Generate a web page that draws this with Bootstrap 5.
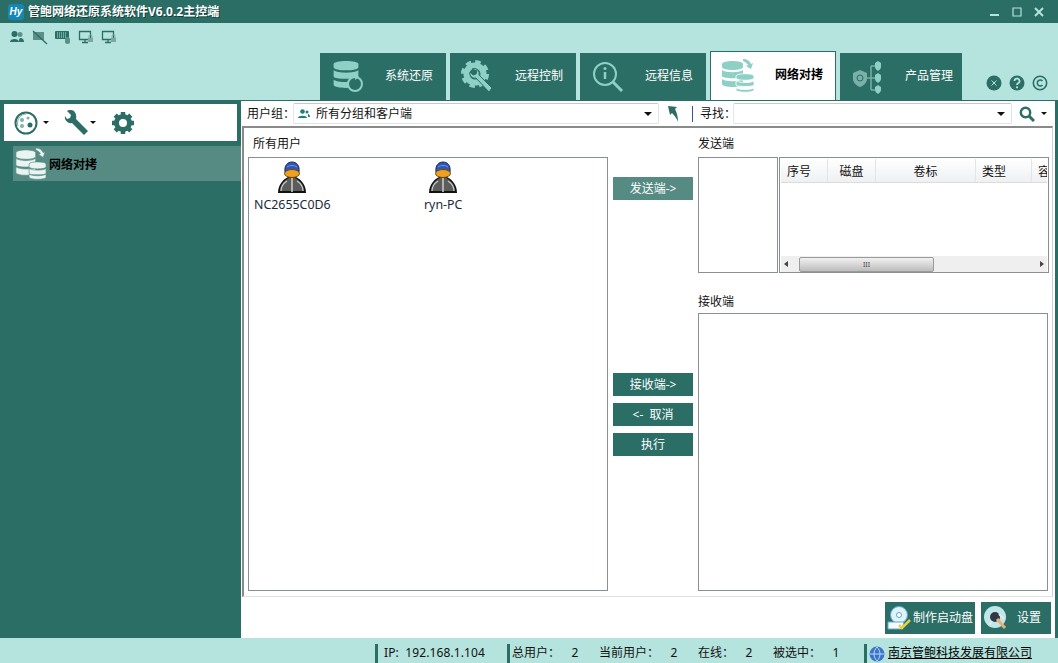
<!DOCTYPE html>
<html lang="zh">
<head>
<meta charset="utf-8">
<title>管鲍网络还原系统软件</title>
<link href="https://cdn.jsdelivr.net/npm/bootstrap@5.3.0/dist/css/bootstrap.min.css" rel="stylesheet">
<style>
html,body{width:1058px;height:663px;overflow:hidden;margin:0;background:#2b6e66;color:#111;font:12px/16px "Noto Sans","Noto Sans CJK SC",sans-serif}
.ttl{height:23px;background:#2b6e66;color:#fff;font-weight:700;padding-left:8px;text-shadow:1px 1px 0 #123f3a}
.hy{width:16px;height:16px;border-radius:3px;background:#1487b4;color:#fff;font:italic 700 10px/16px "Liberation Sans",sans-serif;text-align:center;margin-right:4px;text-shadow:none}
.winb{margin-right:14px;gap:12px}
.mint{background:#b5e3dd}
.tools{height:77px}
.tbar{height:30px;padding:7px 0 0 9px;gap:7px}
.tabsrow{height:47px;padding-left:320px;gap:4px}
.tabx{width:126px;height:47px;background:#2b6e66;color:#fff;padding-left:11px}
.tabx svg{flex:none}
.tabx span{margin-left:auto;margin-right:13px;margin-bottom:2px}
.tabx.wide{width:122px}
.tabx.wide span{margin-right:9px}
.tabx.act{background:#fff;color:#000;font-weight:700;height:49px;margin-top:-2px;border:1px solid #2b6e66;border-bottom:0;padding-left:10px}
.tabx.act span{margin-right:12px}
.hlp{margin-left:24px;margin-bottom:9px;gap:7px;position:relative;left:-4px}
.mainw{height:538px}
.side{width:241px;flex:none;padding-top:4px}
.sidetools{margin-left:4px;width:233px;height:37px;background:#fff;padding-left:10px}
.caret{width:0;height:0;border:3px solid transparent;border-top:3px solid #111;border-bottom:0}
.sideitem{height:35px;margin:5px 0 0 13px;background:#558b83;padding-left:2px;font-weight:700;color:#000}
.sideitem span{margin:2px 0 0 2px}
.cont{width:814px;flex:none;background:#fff;height:537px;margin-top:1px;margin-left:0}
.filt{height:25px;padding-left:6px}
.lbl1{width:46px;white-space:nowrap;flex:none}
.combo{height:21px;background:#fff;border:1px solid #dfe3ec;border-top-color:#c8c8c8;border-left-color:#e4e6ee;border-radius:2px;padding:0 6px 0 4px;flex:none}
.combo .caret{margin-left:auto;border-width:4px 4px 0}
.c1{width:366px}
.c1 svg{margin-right:6px}
.c2{width:279px}
.uparrow{margin-left:8px;flex:none}
.vbar{width:1px;height:16px;background:#3b4ea0;margin:0 7px 0 13px;flex:none}
.lbl2{width:33px;white-space:nowrap;flex:none}
.srch{margin-left:7px;flex:none}
.frame{height:471px;margin-left:1px;border-top:2px solid #8a8a8a;border-left:2px solid #8a8a8a;border-bottom:1px solid #e2e2e2;border-right:1px solid #d0d0d0;padding-left:4px;width:811px}
.leftp{width:360px;flex:none}
.lab{height:29px;padding:8px 0 0 5px}
.bx{border:1px solid #8a8f96;background:#fff}
.ulist{height:434px;padding-left:5px}
.uitem{padding-top:3px;text-align:center;color:#1b2a3a;font-size:12.400px;white-space:nowrap;line-height:17px}
.uitem svg{display:block;margin:0 auto 1px}
.uitem.u1{width:76px;margin-right:94px}
.uitem.u2{width:38px}
.midp{width:90px;flex:none;padding:49px 0 0 5px}
.acb{width:80px;height:23px;background:#2b6e66;color:#fff;text-align:center;line-height:23px;margin-bottom:7px;white-space:pre}
.acb.on{background:#558b83;margin-bottom:173px}
.rightp{width:352px;flex:none}
.rightp .lab{padding-left:0}
.sendrow{height:116px;gap:1px}
.sb1{width:80px}
.sb2{width:270px;padding:1px;overflow:hidden}
.thd{height:24px;background:linear-gradient(#fff,#eef0f2);border-bottom:1px solid #dcdcdc;overflow:hidden}
.thd>div{flex:none;text-align:center;line-height:26px;border-right:1px solid #e4e4e4;color:#111}
.thd>.tl{text-align:left;padding-left:6px}
.thd>.w1{width:47px}.thd>.w2{width:48px}.thd>.w3{width:100px}.thd>.w4{width:56px}
.thd>.w5{width:40px;border:0}
.spc{height:73px}
.scr{height:16px;background:#efefef;padding:0 3px}
.thumb{width:135px;height:15px;margin:0 0 0 11px;border:1px solid #9a9a9a;border-radius:2px;background:linear-gradient(#f1f1f1,#bdbdbd);text-align:center;font-size:7px;line-height:13px;color:#444}
.tri{width:0;height:0;border:3px solid transparent}
.l{border-right:4px solid #444;border-left:0}
.r{border-left:4px solid #444;border-right:0;margin-left:auto}
.lab2{height:40px;padding-top:21px}
.recv{height:278px;width:350px}
.actions{height:41px;padding:5px 4px 0 0;gap:6px;background:#fff}
.bbtn{height:32px;background:#2b6e66;color:#fff;padding:0 2px}
.bb1{width:90px}.bb2{width:70px}
.bbtn span{white-space:nowrap}
.bb2 span{margin:0 8px 0 auto}
.stat{height:25px;padding-top:6px;white-space:nowrap}
.sep{width:3px;height:19px;background:#2b6e66;flex:none}
.strow span{display:block;flex:none;padding-top:1px}
.ipx{width:129px;padding-left:6px;white-space:pre;letter-spacing:.1px}
.num{width:12px;text-align:center}
.nx{margin-left:18px}
.cmp{text-decoration:underline;color:#000}
.rstrip{width:3px;background:#2b6e66}
</style>
</head>
<body>
<svg width="0" height="0" style="position:absolute">
<defs>
<symbol id="usr" viewBox="0 0 30 34">
<path d="M1 32c0-9 6-14 10-16h8c4 2 10 7 10 16z" fill="#111"/>
<path d="M3 30c0-7 5-11 9-13h6c4 2 9 6 9 13z" fill="#5c5c5a"/>
<path d="M4 30c0-5 3-8 6-10M26 30c0-5-3-8-6-10" fill="none" stroke="#c9c9c9" stroke-width="1.200"/>
<path d="M15 17v14" stroke="#cfcfcf" stroke-width="1.500"/>
<path d="M8 11C7 4 11 1 15 1s8 3 7 10z" fill="#2f57b8" stroke="#15285f"/>
<path d="M10 6c3-2 7-2 10 0" stroke="#6f95e6" fill="none"/>
<ellipse cx="15" cy="12.500" rx="7.500" ry="4" fill="#f0a020" stroke="#6d4a08"/>
</symbol>
<symbol id="dbs" viewBox="0 0 26 32">
<g fill="currentColor">
<path d="M1 5c0-4 24-4 24 0v3c0 4-24 4-24 0z"/>
<path d="M1 11c4 3 20 3 24 0v6c0 3-24 3-24 0z"/>
<path d="M1 20c4 3 20 3 24 0v5c0 4-24 4-24 0z"/>
</g>
</symbol>
<symbol id="dbcopy" viewBox="0 0 34 34">
<g fill="currentColor">
<path d="M1 5c0-4 21-4 21 0v3c0 4-21 4-21 0z"/>
<path d="M1 11c4 3 17 3 21 0v6c0 3-21 3-21 0z"/>
<path d="M1 20c4 3 17 3 21 0v5c0 4-21 4-21 0z"/>
<path d="M15 17c0-3 18-3 18 0v2c0 3-18 3-18 0z" stroke="#fff" stroke-width=".8"/>
<path d="M15 22c4 2 14 2 18 0v4c0 2-18 2-18 0z" stroke="#fff" stroke-width=".8"/>
<path d="M15 29c4 2 14 2 18 0v2c0 3-18 3-18 0z" stroke="#fff" stroke-width=".8"/>
<path d="M22 0c4 0 7 2 8 5l2-1-2 6-5-3 2-1c-1-2-3-3-5-4z"/>
</g>
</symbol>
<symbol id="dbcopy2" viewBox="0 0 34 34">
<g fill="#eaf5f2" stroke="#558b83" stroke-width=".7">
<path d="M1 5c0-4 21-4 21 0v4c0 4-21 4-21 0z"/>
<path d="M1 11c4 3 17 3 21 0v7c0 3-21 3-21 0z"/>
<path d="M1 20c4 3 17 3 21 0v6c0 4-21 4-21 0z"/>
<path d="M15 17c0-3 18-3 18 0v3c0 3-18 3-18 0z"/>
<path d="M15 22c4 2 14 2 18 0v5c0 2-18 2-18 0z"/>
<path d="M15 28c4 2 14 2 18 0v3c0 3-18 3-18 0z"/>
<path d="M22 0c4 0 7 2 8 5l2-1-2 6-5-3 2-1c-1-2-3-3-5-4z"/>
</g>
</symbol>
<symbol id="lockpc" viewBox="0 0 16 14">
<path d="M1.500 1.500h11v8h-11zM4 12.500h6M7 9.500v3" fill="none" stroke="#2b6e66" stroke-width="1.300"/>
<rect x="10" y="8" width="5" height="4" fill="#7fa7a1"/>
<path d="M11 8V6.500a1.500 1.500 0 0 1 3 0V8" fill="none" stroke="#7fa7a1"/>
</symbol>
</defs>
</svg>

<div class="ttl d-flex align-items-center">
  <div class="hy">Hy</div><div>管鲍网络还原系统软件V6.0.2主控端</div>
  <div class="winb d-flex align-items-center ms-auto">
    <svg width="10" height="10" viewBox="0 0 10 10"><path d="M0 8h9" stroke="#b5e3dd" stroke-width="2"/></svg>
    <svg width="10" height="10" viewBox="0 0 10 10"><path d="M1 1h8v8H1z" fill="none" stroke="#b5e3dd" stroke-width="1.200"/></svg>
    <svg width="10" height="10" viewBox="0 0 10 10"><path d="M1 1l8 8M9 1l-8 8" stroke="#b5e3dd" stroke-width="2"/></svg>
  </div>
</div>

<div class="tools mint">
  <div class="tbar d-flex align-items-start">
    <svg width="16" height="14" viewBox="0 0 16 14"><circle cx="5.500" cy="4" r="3" fill="#2b6e66"/><circle cx="11" cy="4.500" r="2.500" fill="#5b938b"/><path d="M1 12c0-4 9-4 9 0zM10 12c0-2 0-3 1-4 3 0 4 2 4 4z" fill="#2b6e66"/></svg>
    <svg width="16" height="15" viewBox="0 0 16 15"><rect x="1" y="2" width="11" height="8" fill="#5b8f88"/><path d="M1 1l14 13" stroke="#2b6e66" stroke-width="1.300"/></svg>
    <svg width="16" height="14" viewBox="0 0 16 14"><rect x="0" y="1" width="14" height="8" rx="1" fill="#2b6e66"/><path d="M2 3h10M2 5h10M2 7h10" stroke="#b5e3dd" stroke-dasharray="1 1"/><rect x="10" y="7" width="5" height="7" rx="2.500" fill="#5b8f88"/></svg>
    <svg width="16" height="14"><use href="#lockpc"/></svg>
    <svg width="16" height="14"><use href="#lockpc"/></svg>
  </div>
  <div class="tabsrow d-flex align-items-end">
    <div class="tabx d-flex align-items-center">
      <svg width="34" height="36" viewBox="0 0 34 36" style="color:#8fd0c6"><use href="#dbs" width="30" height="33" y="0"/><circle cx="24" cy="25" r="7" fill="#2b6e66" stroke="#8fd0c6" stroke-width="2"/><path d="M24 15l4 3-4 3z" fill="#8fd0c6"/></svg>
      <span>系统还原</span>
    </div>
    <div class="tabx d-flex align-items-center">
      <svg width="34" height="34" viewBox="0 0 34 34"><circle cx="14" cy="14" r="8.500" fill="none" stroke="#8fd0c6" stroke-width="6"/><circle cx="14" cy="14" r="12.500" fill="none" stroke="#8fd0c6" stroke-width="3" stroke-dasharray="5.500 4.300"/><path d="M11 9a5 5 0 0 1 7 6l13 13-3 4-13-14a5 5 0 0 1-6-6l3 3 3-1 1-3z" fill="#8fd0c6" stroke="#2b6e66"/></svg>
      <span>远程控制</span>
    </div>
    <div class="tabx d-flex align-items-center">
      <svg width="34" height="34" viewBox="0 0 34 34"><circle cx="14" cy="14" r="11" fill="none" stroke="#8fd0c6" stroke-width="2"/><path d="M22 22l9 9" stroke="#8fd0c6" stroke-width="3"/><path d="M14 12v7" stroke="#8fd0c6" stroke-width="2.500"/><circle cx="14" cy="8.500" r="1.500" fill="#8fd0c6"/></svg>
      <span>远程信息</span>
    </div>
    <div class="tabx act d-flex align-items-center">
      <svg width="34" height="34" style="color:#8fd0c6"><use href="#dbcopy"/></svg>
      <span>网络对拷</span>
    </div>
    <div class="tabx wide d-flex align-items-center">
      <svg width="34" height="34" viewBox="0 0 34 34"><path d="M2 13l7-3 7 3v6c0 4-4 7-7 8-3-1-7-4-7-8z" fill="#79b0a8"/><circle cx="9" cy="18" r="3" fill="none" stroke="#2b6e66"/><path d="M16 18h8M20 6h4M20 30h4M20 6v24" stroke="#79b0a8" stroke-width="1.500"/><g fill="#8fd0c6"><path d="M24 3l3-2 3 2v4c0 2-2 3-3 4-1-1-3-2-3-4z"/><path d="M24 15l3-2 3 2v4c0 2-2 3-3 4-1-1-3-2-3-4z"/><path d="M24 27l3-2 3 2v3c0 2-2 3-3 4-1-1-3-2-3-4z"/></g></svg>
      <span>产品管理</span>
    </div>
    <div class="hlp d-flex">
      <svg width="16" height="16" viewBox="0 0 16 16"><circle cx="8" cy="8" r="7.500" fill="#2b6e66"/><path d="M5.500 5.500l5 5M10.500 5.500l-5 5" stroke="#b5e3dd"/></svg>
      <svg width="16" height="16" viewBox="0 0 16 16"><circle cx="8" cy="8" r="7.500" fill="#2b6e66"/><path d="M5.500 6a2.500 2.500 0 1 1 3.500 2.300c-.7.400-1 .7-1 1.700" fill="none" stroke="#b5e3dd" stroke-width="1.800"/><circle cx="8" cy="12.300" r="1.100" fill="#b5e3dd"/></svg>
      <svg width="16" height="16" viewBox="0 0 16 16"><circle cx="8" cy="8" r="6.700" fill="none" stroke="#2b6e66" stroke-width="1.600"/><path d="M10.500 6a3 3 0 1 0 0 4" fill="none" stroke="#2b6e66" stroke-width="1.500"/></svg>
    </div>
  </div>
</div>

<div class="mainw d-flex">
  <div class="side">
    <div class="sidetools d-flex align-items-center">
      <svg width="24" height="24" viewBox="0 0 24 24"><circle cx="12" cy="12" r="10.500" fill="#fff" stroke="#2b6e66" stroke-width="2"/><circle cx="8" cy="9" r="2" fill="#7fb0a9"/><circle cx="14" cy="7" r="1.500" fill="#7fb0a9"/><circle cx="8" cy="15" r="2" fill="#7fb0a9"/><circle cx="16" cy="14" r="2.500" fill="#2b6e66"/><path d="M12 3a9 9 0 0 0-8 12" fill="none" stroke="#7fb0a9"/></svg>
      <div class="caret" style="margin:0 15px 0 5px"></div>
      <svg width="26" height="26" viewBox="0 0 26 26"><path d="M6 1a6 6 0 0 0-4 1l4 4-1 3-3 1-2-3c-1 4 3 8 7 7l12 12 4-4L11 10c1-4-1-9-5-9z" fill="#2b6e66" transform="translate(1 -1)"/></svg>
      <div class="caret" style="margin:0 15px 0 0"></div>
      <svg width="24" height="24" viewBox="0 0 24 24"><circle cx="12" cy="12" r="6.500" fill="none" stroke="#2b6e66" stroke-width="5"/><path d="M12 1v4M12 19v4M1 12h4M19 12h4M4.200 4.200l3 3M16.800 16.800l3 3M19.800 4.200l-3 3M4.200 19.800l3-3" stroke="#2b6e66" stroke-width="4.500"/></svg>
    </div>
    <div class="sideitem d-flex align-items-center">
      <svg width="32" height="32"><use href="#dbcopy2"/></svg>
      <span>网络对拷</span>
    </div>
  </div>
  <div class="cont">
    <div class="filt d-flex align-items-center">
      <span class="lbl1">用户组：</span>
      <div class="combo c1 d-flex align-items-center">
        <svg width="12" height="10" viewBox="0 0 12 10"><circle cx="4.500" cy="2.500" r="2.300" fill="#1f7d78"/><circle cx="9" cy="3" r="1.500" fill="#1f7d78"/><path d="M0 9c0-3 9-3 9 0zM10 8h2c0-2-1-3-2-3z" fill="#1f7d78"/></svg>
        <span>所有分组和客户端</span>
        <div class="caret"></div>
      </div>
      <svg width="12" height="16" viewBox="0 0 12 16" class="uparrow"><path d="M1 0l9 1-2 2c2 4 3 8 3 13-1-3-3-6-6-9L3 9z" fill="#2b6e66"/></svg>
      <div class="vbar"></div>
      <span class="lbl2">寻找：</span>
      <div class="combo c2 d-flex align-items-center"><div class="caret"></div></div>
      <svg width="16" height="16" viewBox="0 0 16 16" class="srch"><circle cx="6.500" cy="6.500" r="4.700" fill="none" stroke="#2b6e66" stroke-width="2.400"/><path d="M10 10l5 5" stroke="#2b6e66" stroke-width="3"/></svg>
      <div class="caret ms-2"></div>
    </div>
    <div class="frame d-flex">
      <div class="leftp">
        <div class="lab">所有用户</div>
        <div class="bx ulist d-flex">
          <div class="uitem u1"><svg width="30" height="34"><use href="#usr"/></svg>NC2655C0D6</div>
          <div class="uitem u2"><svg width="30" height="34"><use href="#usr"/></svg>ryn-PC</div>
        </div>
      </div>
      <div class="midp">
        <div class="acb on">发送端-&gt;</div>
        <div class="acb">接收端-&gt;</div>
        <div class="acb">&lt;-  取消</div>
        <div class="acb">执行</div>
      </div>
      <div class="rightp">
        <div class="lab">发送端</div>
        <div class="sendrow d-flex">
          <div class="bx sb1"></div>
          <div class="bx sb2">
            <div class="thd d-flex">
              <div class="w1 tl">序号</div><div class="w2">磁盘</div><div class="w3">卷标</div><div class="w4 tl">类型</div><div class="w5 tl">容量</div>
            </div>
            <div class="spc"></div>
            <div class="scr d-flex align-items-center">
              <div class="tri l"></div><div class="thumb">III</div><div class="tri r"></div>
            </div>
          </div>
        </div>
        <div class="lab2">接收端</div>
        <div class="bx recv"></div>
      </div>
    </div>
    <div class="actions d-flex justify-content-end">
      <div class="bbtn bb1 d-flex align-items-center">
        <svg width="26" height="26" viewBox="0 0 26 26"><circle cx="12" cy="10" r="8.500" fill="#dff2f7" stroke="#5ba8d0"/><circle cx="12" cy="10" r="2.500" fill="#fff" stroke="#5ba8d0"/><path d="M1 17h16l-2 7H1z" fill="#f4fbfd" stroke="#6aa8c8"/><path d="M12 20l3 3 8-8" fill="none" stroke="#e7d23a" stroke-width="2.500"/></svg>
        <span>制作启动盘</span>
      </div>
      <div class="bbtn bb2 d-flex align-items-center">
        <svg width="26" height="26" viewBox="0 0 26 26"><circle cx="12" cy="12" r="11" fill="#bfe6ea"/><circle cx="12" cy="12" r="5" fill="#2d3a46"/><path d="M14 14l8 9" stroke="#e7b07a" stroke-width="3"/><path d="M9 16l-3 4M16 9l5 5" stroke="#e8e8e8" stroke-width="2"/></svg>
        <span>设置</span>
      </div>
    </div>
  </div>
  <div class="rstrip"></div>
</div>

<div class="stat mint d-flex strow">
  <div class="sep" style="margin-left:375px"></div>
  <span class="ipx">IP:  192.168.1.104</span>
  <div class="sep"></div>
  <span style="margin-left:2px;width:57px">总用户：</span><span class="num">2</span>
  <span class="nx" style="width:69px">当前用户：</span><span class="num">2</span>
  <span class="nx" style="width:45px">在线：</span><span class="num">2</span>
  <span class="nx" style="width:57px">被选中：</span><span class="num">1</span>
  <div class="sep" style="margin-left:22px"></div>
  <svg width="16" height="16" viewBox="0 0 16 16" style="margin:2px 3px 0 2px;flex:none"><circle cx="8" cy="8" r="7.500" fill="#3c74c8"/><path d="M1 8h14M8 1c-4 4-4 10 0 14M8 1c4 4 4 10 0 14" stroke="#bcd8f5" fill="none"/></svg>
  <span class="cmp">南京管鲍科技发展有限公司</span>
</div>
<script src="https://cdn.jsdelivr.net/npm/bootstrap@5.3.0/dist/js/bootstrap.bundle.min.js"></script>
</body>
</html>
